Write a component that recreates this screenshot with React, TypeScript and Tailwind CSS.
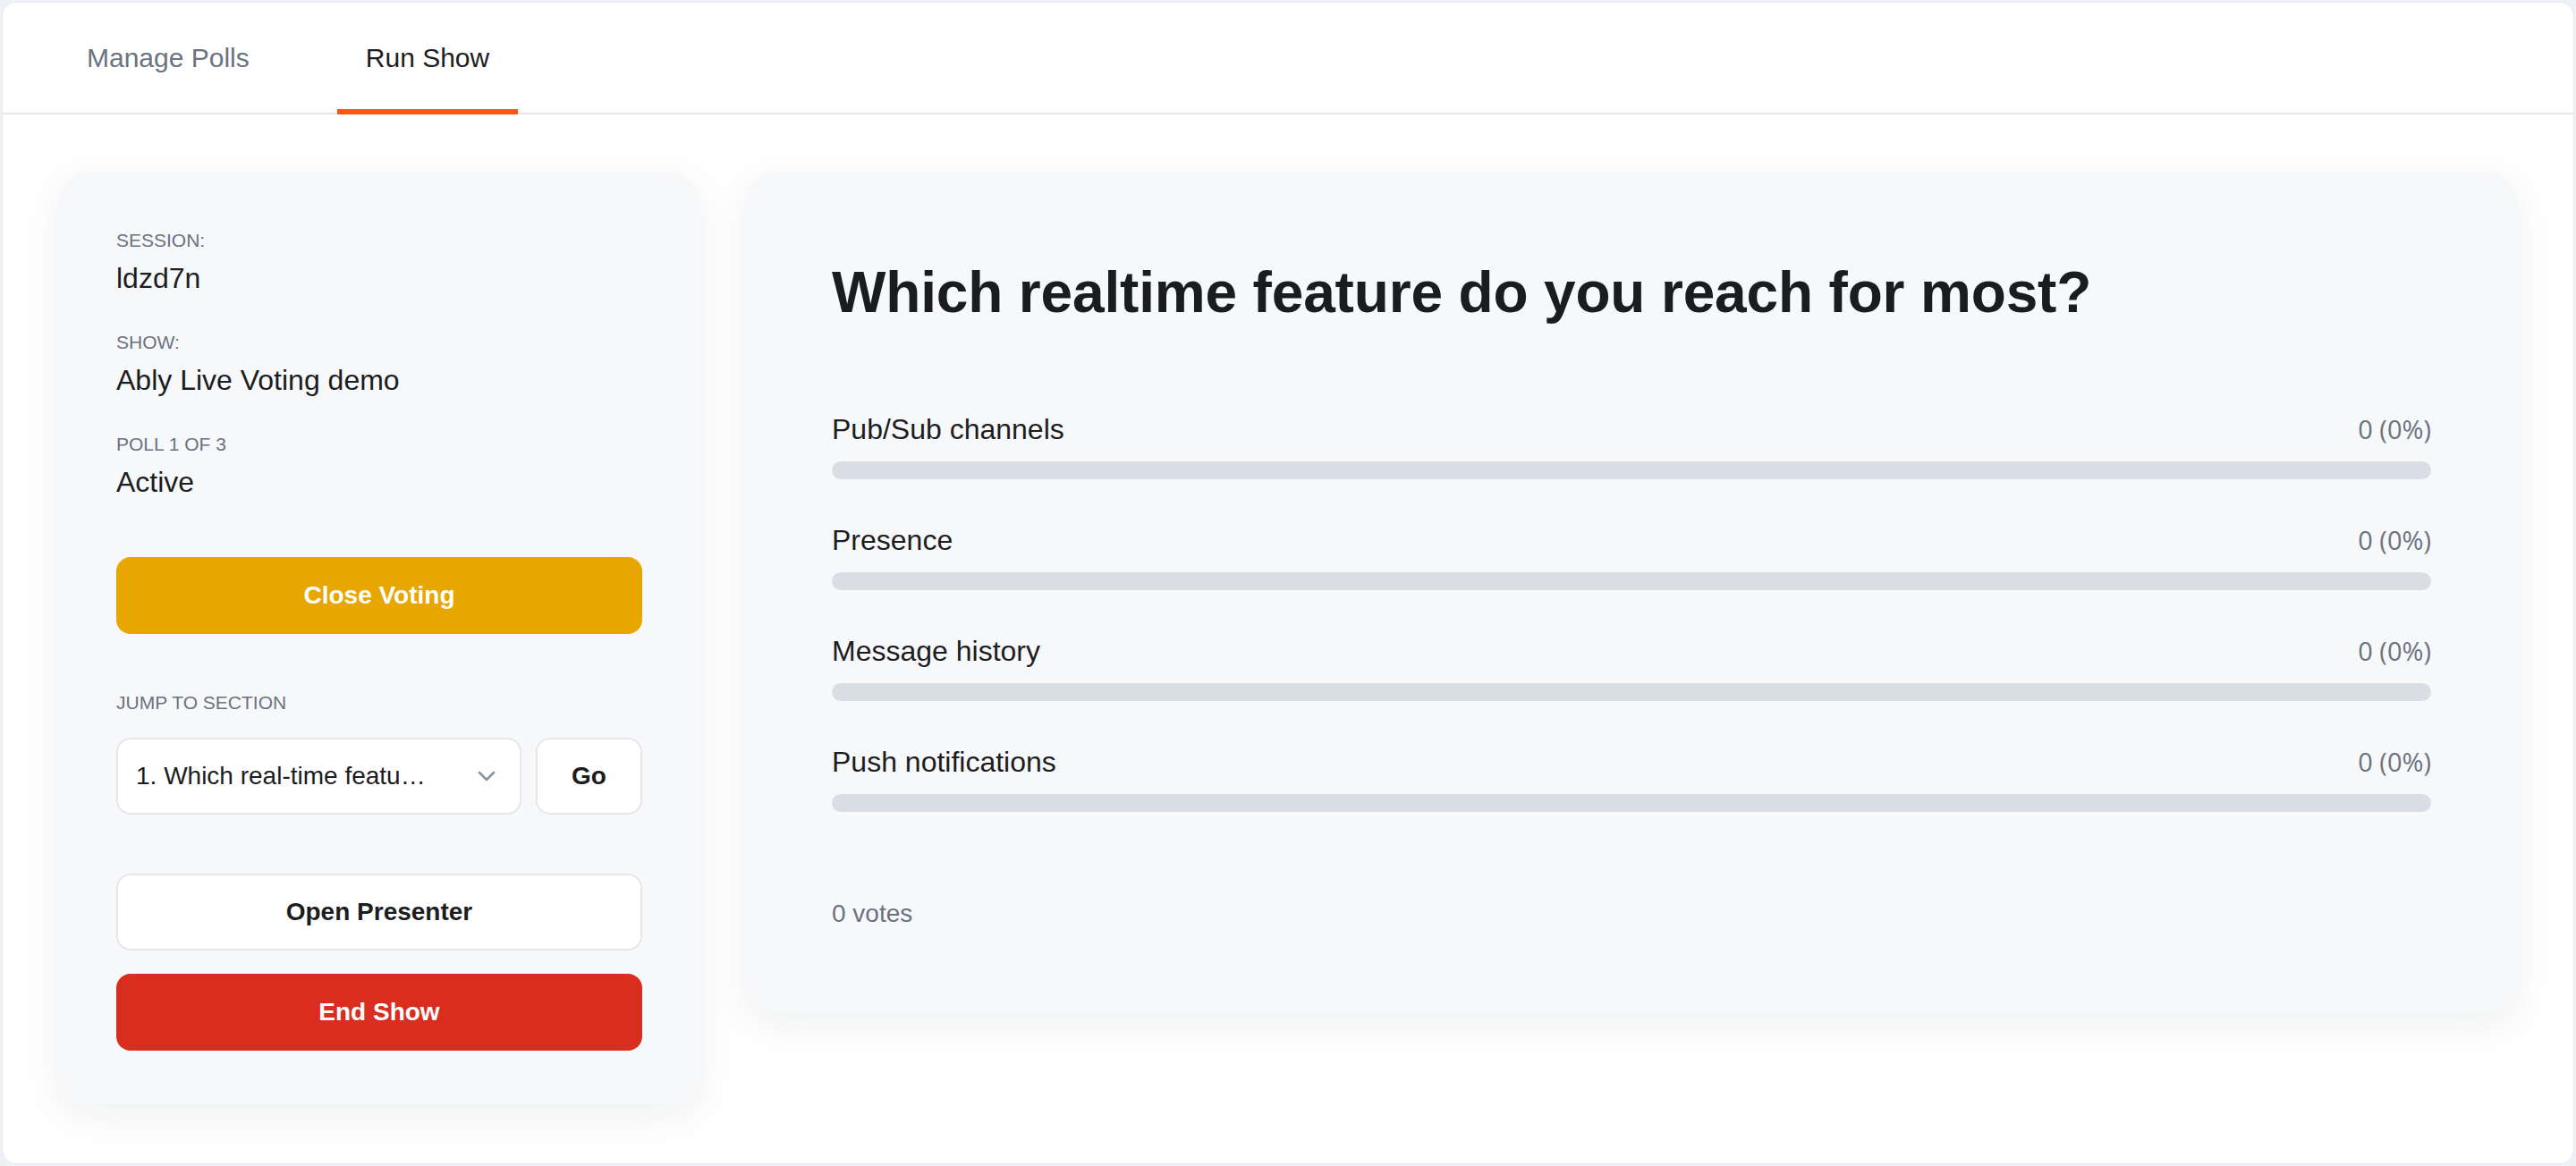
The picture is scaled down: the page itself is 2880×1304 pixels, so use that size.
import React from 'react';

const options = [
  { label: 'Pub/Sub channels', votes: 0 },
  { label: 'Presence', votes: 0 },
  { label: 'Message history', votes: 0 },
  { label: 'Push notifications', votes: 0 },
];

function Info({ label, value }: { label: string; value: string }) {
  return (
    <div>
      <div className="text-[21px] leading-[28px] uppercase text-[#6b7280]">{label}</div>
      <div className="mt-2 text-[32px] leading-[40px] text-[#1c1d1f]">{value}</div>
    </div>
  );
}

function ControlPanel() {
  return (
    <div className="w-[716px] shrink-0 rounded-[32px] bg-[#f7f8fa] px-16 pt-[62px] pb-[59px] shadow-[0_12px_48px_rgba(15,23,42,0.07)]">
      <div className="flex flex-col gap-[38px]">
        <Info label="Session:" value="ldzd7n" />
        <Info label="Show:" value="Ably Live Voting demo" />
        <Info label="Poll 1 of 3" value="Active" />
      </div>
      <button className="mt-16 flex h-[86px] w-full items-center justify-center rounded-2xl bg-[#e7a600] text-[28px] font-bold text-white">
        Close Voting
      </button>
      <div className="mt-[63px] text-[21px] leading-[28px] uppercase text-[#6b7280]">Jump to section</div>
      <div className="mt-[25px] flex gap-4">
        <div className="flex h-[86px] flex-1 items-center justify-between rounded-2xl border-2 border-[#e5e7eb] bg-white pl-5 pr-[27px]">
          <span className="text-[28px] text-[#1c1d1f]">1. Which real-time featu…</span>
          <svg width="20" height="12" viewBox="0 0 20 12" fill="none">
            <path d="M2 2 L10 10 L18 2" stroke="#8b93a1" strokeWidth="2.6" strokeLinecap="round" strokeLinejoin="round" />
          </svg>
        </div>
        <button className="flex h-[86px] w-[119px] items-center justify-center rounded-2xl border-2 border-[#e5e7eb] bg-white text-[28px] font-bold text-[#1c1d1f]">
          Go
        </button>
      </div>
      <button className="mt-[66px] flex h-[86px] w-full items-center justify-center rounded-2xl border-2 border-[#e5e7eb] bg-white text-[28px] font-bold text-[#1c1d1f]">
        Open Presenter
      </button>
      <button className="mt-[26px] flex h-[86px] w-full items-center justify-center rounded-2xl bg-[#d92d20] text-[28px] font-bold text-white">
        End Show
      </button>
    </div>
  );
}

function Results() {
  const total = options.reduce((s, o) => s + o.votes, 0);
  return (
    <div className="flex-1 rounded-[32px] bg-[#f7f8fa] px-24 pt-24 pb-[93px] shadow-[0_12px_48px_rgba(15,23,42,0.07)]">
      <h1 className="text-[64px] font-bold leading-[1.2] tracking-[-0.16px] text-[#1b1c1e]">
        Which realtime feature do you reach for most?
      </h1>
      <div className="mt-[94px] flex flex-col gap-12">
        {options.map((o) => {
          const pct = total ? Math.round((o.votes / total) * 100) : 0;
          return (
            <div key={o.label}>
              <div className="flex items-baseline justify-between">
                <span className="text-[32px] leading-[40px] text-[#1c1d1f]">{o.label}</span>
                <span className="font-['Open_Sans'] text-[29px] leading-[40px] text-[#6b7280]">
                  {o.votes} ({pct}%)
                </span>
              </div>
              <div className="mt-4 h-5 rounded-full bg-[#d9dde4]">
                <div className="h-5 rounded-full bg-[#ff5416]" style={{ width: `${pct}%` }} />
              </div>
            </div>
          );
        })}
      </div>
      <div className="mt-24 text-[28px] leading-[36px] text-[#6b7280]">{total} votes</div>
    </div>
  );
}

export default function App() {
  return (
    <div className="flex min-h-screen bg-[#eef1f5] p-[2px] font-['Liberation_Sans',sans-serif]">
      <div className="flex-1 overflow-hidden rounded-2xl border border-[#e6e9ef] bg-white">
        <nav className="flex h-[125px] gap-[66px] border-b-2 border-[#e5e7eb] pl-[62px]">
          <div className="flex items-center px-8 text-[30px] text-[#6b7280]">Manage Polls</div>
          <div className="relative flex items-center px-8 text-[30px] text-[#1c1d1f]">
            Run Show
            <span className="absolute right-0 bottom-[-2px] left-0 h-[6px] bg-[#ff5416]" />
          </div>
        </nav>
        <main className="flex items-start gap-[52px] px-[63px] pt-[65px]">
          <ControlPanel />
          <Results />
        </main>
      </div>
    </div>
  );
}
